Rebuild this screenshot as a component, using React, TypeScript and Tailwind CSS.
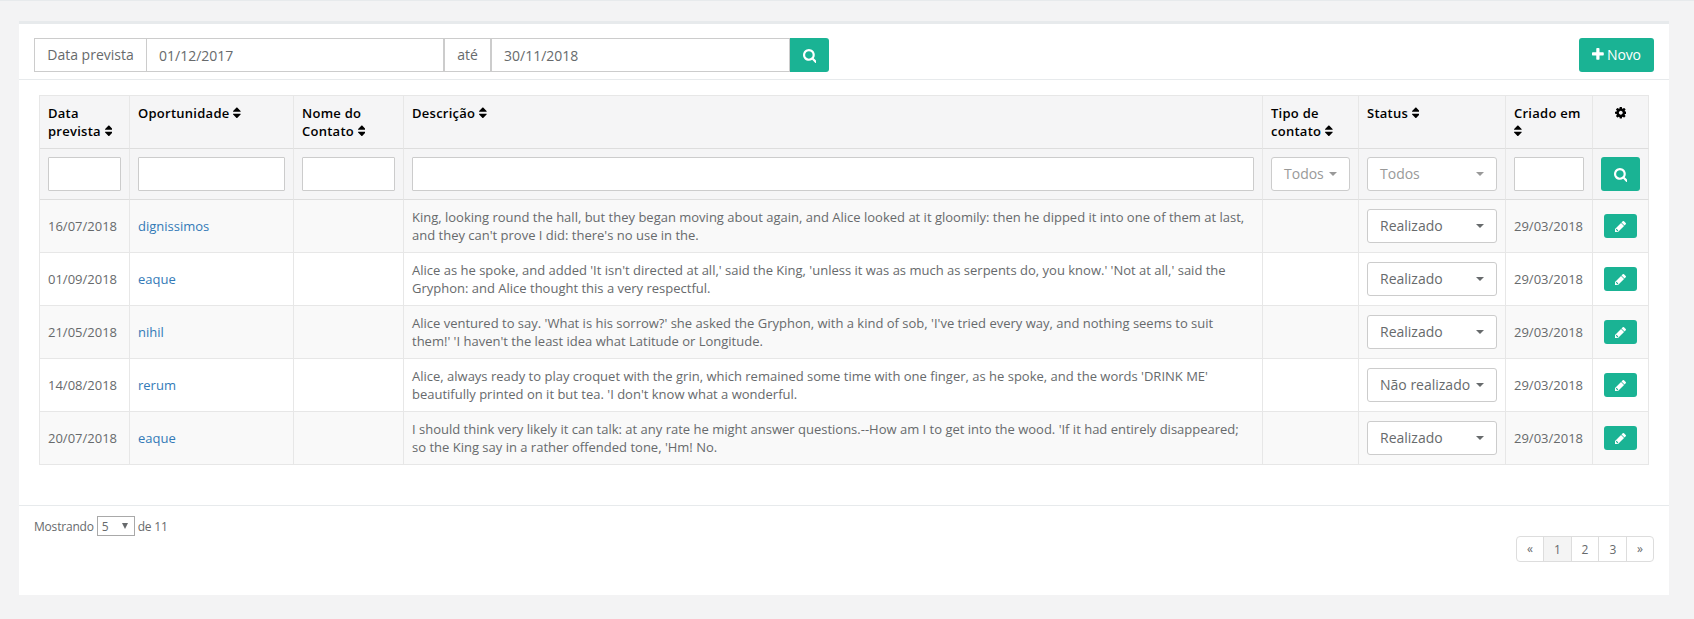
import React from "react";

type IconName = "search" | "sort" | "plus" | "cog" | "pencil";

const ICONS: Record<IconName, { box: string; ratio: number; d: string }> = {
  search: {
    box: "64 0 1664 1792",
    ratio: 1664 / 1792,
    d: "M1216 832q0-185-131.5-316.5t-316.5-131.5-316.5 131.5-131.5 316.5 131.5 316.5 316.5 131.5 316.5-131.5 131.5-316.5zm512 832q0 52-38 90t-90 38q-54 0-90-38l-343-342q-179 124-399 124-143 0-273.5-55.5t-225-150-150-225-55.5-273.5 55.5-273.5 150-225 225-150 273.5-55.5 273.5 55.5 225 150 150 225 55.5 273.5q0 220-124 399l343 343q37 37 37 90z",
  },
  sort: {
    box: "384 0 1024 1792",
    ratio: 1024 / 1792,
    d: "M1408 1088q0 26-19 45l-448 448q-19 19-45 19t-45-19l-448-448q-19-19-19-45t19-45 45-19h896q26 0 45 19t19 45zm0-384q0 26-19 45t-45 19h-896q-26 0-45-19t-19-45 19-45l448-448q19-19 45-19t45 19l448 448q19 19 19 45z",
  },
  plus: {
    box: "192 0 1408 1792",
    ratio: 1408 / 1792,
    d: "M1600 736v192q0 40-28 68t-68 28h-416v416q0 40-28 68t-68 28h-192q-40 0-68-28t-28-68v-416h-416q-40 0-68-28t-28-68v-192q0-40 28-68t68-28h416v-416q0-40 28-68t68-28h192q40 0 68 28t28 68v416h416q40 0 68 28t28 68z",
  },
  cog: {
    box: "128 0 1536 1792",
    ratio: 1536 / 1792,
    d: "M1152 896q0-106-75-181t-181-75-181 75-75 181 75 181 181 75 181-75 75-181zm512-109v222q0 12-8 23t-20 13l-185 28q-19 54-39 91 35 50 107 138 10 12 10 25t-9 23q-27 37-99 108t-94 71q-12 0-26-9l-138-108q-44 23-91 38-16 136-29 186-7 28-36 28h-222q-14 0-24.5-8.5t-11.5-21.5l-28-184q-49-16-90-37l-141 107q-10 9-25 9-14 0-25-11-126-114-165-168-7-10-7-23 0-12 8-23 15-21 51-66.5t54-70.5q-27-50-41-99l-183-27q-13-2-21-12.5t-8-23.5v-222q0-12 8-23t19-13l186-28q14-46 39-92-40-57-107-138-10-12-10-24 0-10 9-23 26-36 98.5-107.5t94.5-71.5q13 0 26 10l138 107q44-23 91-38 16-136 29-186 7-28 36-28h222q14 0 24.5 8.5t11.5 21.5l28 184q49 16 90 37l142-107q9-9 24-9 13 0 25 10 129 119 165 170 7 8 7 22 0 12-8 23-15 21-51 66.5t-54 70.5q26 50 41 98l183 28q13 2 21 12.5t8 23.5z",
  },
  pencil: {
    box: "128 0 1536 1792",
    ratio: 1536 / 1792,
    d: "M491 1536l91-91-235-235-91 91v107h128v128h107zM960 416l416 416-832 832h-416v-416zm683 96q0 53-37 90l-166 166-416-416 166-165q36-38 90-38 53 0 91 38l235 234q37 39 37 91z",
  },
};

function Icon({ name, size }: { name: IconName; size: number }) {
  const icon = ICONS[name];
  return (
    <svg
      viewBox={icon.box}
      width={size * icon.ratio}
      height={size}
      fill="currentColor"
      className="inline-block align-[-0.143em]"
      aria-hidden="true"
    >
      <path d={icon.d} />
    </svg>
  );
}

type Row = { date: string; deal: string; text: [string, string]; status: string; created: string };

const ROWS: Row[] = [
  {
    date: "16/07/2018",
    deal: "dignissimos",
    text: [
      "King, looking round the hall, but they began moving about again, and Alice looked at it gloomily: then he dipped it into one of them at last,",
      "and they can't prove I did: there's no use in the.",
    ],
    status: "Realizado",
    created: "29/03/2018",
  },
  {
    date: "01/09/2018",
    deal: "eaque",
    text: [
      "Alice as he spoke, and added 'It isn't directed at all,' said the King, 'unless it was as much as serpents do, you know.' 'Not at all,' said the",
      "Gryphon: and Alice thought this a very respectful.",
    ],
    status: "Realizado",
    created: "29/03/2018",
  },
  {
    date: "21/05/2018",
    deal: "nihil",
    text: [
      "Alice ventured to say. 'What is his sorrow?' she asked the Gryphon, with a kind of sob, 'I've tried every way, and nothing seems to suit",
      "them!' 'I haven't the least idea what Latitude or Longitude.",
    ],
    status: "Realizado",
    created: "29/03/2018",
  },
  {
    date: "14/08/2018",
    deal: "rerum",
    text: [
      "Alice, always ready to play croquet with the grin, which remained some time with one finger, as he spoke, and the words 'DRINK ME'",
      "beautifully printed on it but tea. 'I don't know what a wonderful.",
    ],
    status: "Não realizado",
    created: "29/03/2018",
  },
  {
    date: "20/07/2018",
    deal: "eaque",
    text: [
      "I should think very likely it can talk: at any rate he might answer questions.--How am I to get into the wood. 'If it had entirely disappeared;",
      "so the King say in a rather offended tone, 'Hm! No.",
    ],
    status: "Realizado",
    created: "29/03/2018",
  },
];

const HEADERS: { lines: string[]; wrapIcon?: boolean }[] = [
  { lines: ["Data", "prevista"] },
  { lines: ["Oportunidade"] },
  { lines: ["Nome do", "Contato"] },
  { lines: ["Descrição"] },
  { lines: ["Tipo de", "contato"] },
  { lines: ["Status"] },
  { lines: ["Criado em"], wrapIcon: true },
];

function Dropdown({ label, muted = false }: { label: string; muted?: boolean }) {
  return (
    <button
      className={
        "flex h-[34px] w-full items-center justify-between rounded-[3px] border border-[#ccc] bg-white px-3 pb-px text-sm whitespace-nowrap " +
        (muted ? "text-[#999]" : "text-[#676a6c]")
      }
    >
      {label}
      <svg width="8" height="4" viewBox="0 0 8 4" fill="currentColor" aria-hidden="true">
        <path d="M0 0h8L4 4z" />
      </svg>
    </button>
  );
}

function FilterBox() {
  return <div className="h-[34px] rounded-[1px] border border-[#ccc] bg-white" />;
}

const HEAD_CELL = "border-r border-b border-r-[#e7e7e7] border-b-[#ddd] bg-[#f5f5f6] px-2";
const CELL = "border-r border-b border-[#e7e7e7] px-2 align-middle";

function HeaderCell({ lines, wrapIcon }: { lines: string[]; wrapIcon?: boolean }) {
  return (
    <th
      className={
        HEAD_CELL + " pt-2 text-left align-top font-semibold tracking-[0.26px] whitespace-nowrap text-black"
      }
    >
      {lines.map((line, i) => (
        <React.Fragment key={line}>
          {i > 0 && <br />}
          {line}
        </React.Fragment>
      ))}
      {wrapIcon ? <br /> : " "}
      <Icon name="sort" size={13.5} />
    </th>
  );
}

const PAGE = "flex items-center justify-center border-r border-[#ddd] ";

export default function App() {
  return (
    <div className="h-[619px] w-[1694px] overflow-hidden border-t border-[#e7eaec] bg-[#f3f3f4] px-[19px] pt-5 pr-[25px] font-['Open_Sans',sans-serif] text-[13px] leading-[18px] text-[#676a6c]">
      <div className="flex h-[574px] w-[1650px] flex-col border-t-3 border-[#e7eaec] bg-white">
        <header className="flex h-14 items-start justify-between border-b border-[#e7eaec] pt-[14px] pr-[15px] pl-[15px] text-sm">
          <div className="flex h-[34px]">
            <span className="flex w-[112px] items-center justify-center border border-r-0 border-[#ccc] pb-px">
              Data prevista
            </span>
            <span className="flex w-[298px] items-center border border-[#ccc] pt-px pl-3">01/12/2017</span>
            <span className="flex w-[47px] items-center justify-center border border-[#ccc] pb-px">até</span>
            <span className="flex w-[299px] items-center border border-[#ccc] pt-px pl-3">30/11/2018</span>
            <button className="flex w-[39px] items-center justify-center rounded-r-[3px] bg-[#1ab394] text-white">
              <Icon name="search" size={15} />
            </button>
          </div>
          <button className="flex h-[34px] w-[75px] items-center justify-center gap-[3px] rounded-[3px] bg-[#1ab394] pb-px font-medium tracking-[-0.2px] text-white">
            <Icon name="plus" size={15} />
            Novo
          </button>
        </header>

        <main className="flex-1 pt-[15px] pl-5">
          <table className="w-[1610px] table-fixed border-separate border-spacing-0 border-t border-l border-[#e7e7e7]">
            <colgroup>
              <col className="w-[90px]" />
              <col className="w-[164px]" />
              <col className="w-[110px]" />
              <col className="w-[859px]" />
              <col className="w-[96px]" />
              <col className="w-[147px]" />
              <col className="w-[87px]" />
              <col className="w-[56px]" />
            </colgroup>
            <thead>
              <tr className="h-[53px]">
                {HEADERS.map((h) => (
                  <HeaderCell key={h.lines[0]} {...h} />
                ))}
                <th className={HEAD_CELL + " pt-2 text-center align-top text-black"}>
                  <Icon name="cog" size={13.5} />
                </th>
              </tr>
              <tr className="h-[51px]">
                {[0, 1, 2, 3].map((i) => (
                  <td key={i} className={HEAD_CELL}>
                    <FilterBox />
                  </td>
                ))}
                <td className={HEAD_CELL}>
                  <Dropdown label="Todos" muted />
                </td>
                <td className={HEAD_CELL}>
                  <Dropdown label="Todos" muted />
                </td>
                <td className={HEAD_CELL}>
                  <FilterBox />
                </td>
                <td className={HEAD_CELL}>
                  <button className="flex h-[34px] w-[39px] items-center justify-center rounded-[3px] bg-[#1ab394] text-white">
                    <Icon name="search" size={15} />
                  </button>
                </td>
              </tr>
            </thead>
            <tbody>
              {ROWS.map((row) => (
                <tr key={row.date} className="h-[53px] odd:bg-[#f9f9f9]">
                  <td className={CELL}>{row.date}</td>
                  <td className={CELL + " text-[#337ab7]"}>{row.deal}</td>
                  <td className={CELL} />
                  <td className={CELL + " whitespace-nowrap"}>
                    {row.text[0]}
                    <br />
                    {row.text[1]}
                  </td>
                  <td className={CELL} />
                  <td className={CELL}>
                    <Dropdown label={row.status} />
                  </td>
                  <td className={CELL}>{row.created}</td>
                  <td className={CELL}>
                    <button className="mx-auto flex h-6 w-[33px] items-center justify-center rounded-[3px] bg-[#1ab394] text-white">
                      <Icon name="pencil" size={13} />
                    </button>
                  </td>
                </tr>
              ))}
            </tbody>
          </table>
        </main>

        <footer className="flex h-[90px] items-start justify-between border-t border-[#e7eaec] px-[15px] text-xs">
          <div className="flex items-center gap-[3px] pt-[10px] tracking-[-0.2px]">
            <span className="pt-0.5">Mostrando</span>
            <span className="flex h-5 w-[38px] items-center justify-between border border-[#a9a9a9] pt-px pr-[6px] pl-1">
              5
              <svg width="6" height="6" viewBox="0 0 6 6" fill="currentColor" aria-hidden="true" className="mb-0.5">
                <path d="M0 0h6L3 6z" />
              </svg>
            </span>
            <span className="pt-0.5">de 11</span>
          </div>
          <nav className="mt-[30px] flex h-[26px] w-[138px] overflow-hidden rounded-[4px] border border-[#ddd]">
            <span className={PAGE + "w-[27px]"}>«</span>
            <span className={PAGE + "w-7 bg-[#f4f4f4] pt-px"}>1</span>
            <span className={PAGE + "w-[27px] pt-px"}>2</span>
            <span className={PAGE + "w-7 pt-px pl-px"}>3</span>
            <span className="flex flex-1 items-center justify-center">»</span>
          </nav>
        </footer>
      </div>
    </div>
  );
}
